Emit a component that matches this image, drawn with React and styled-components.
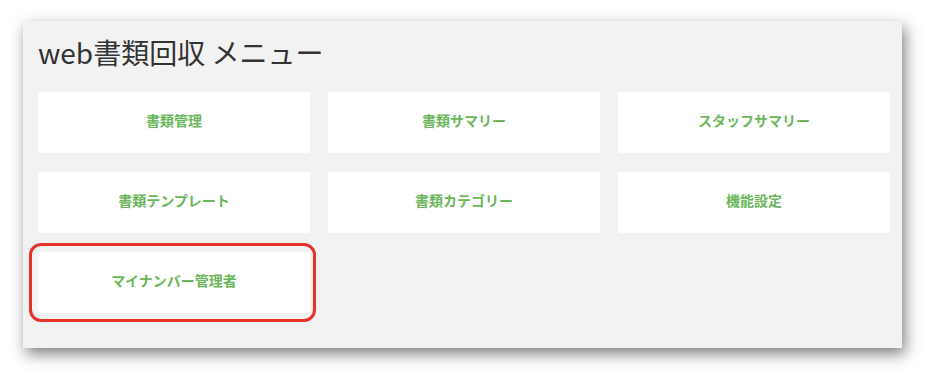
import React from "react"
import styled, { createGlobalStyle } from "styled-components"

const GlobalStyle = createGlobalStyle`
  body {
    margin: 0;
    background: #fff;
    font-family: "Noto Sans CJK JP", "Noto Sans", sans-serif;
  }
`

const Page = styled.div`
  padding: 21px 0 30px 23px;
`

const Panel = styled.div`
  width: 879px;
  box-sizing: border-box;
  padding: 11px 12px 35px 15px;
  background: #f2f2f2;
  box-shadow: 3px 6px 14px rgba(0, 0, 0, 0.5);
`

const Title = styled.h1`
  margin: 0 0 20px;
  font-size: 28px;
  line-height: 40px;
  font-weight: 400;
  color: #333;
`

const Grid = styled.div`
  display: grid;
  grid-template-columns: repeat(3, 272px);
  grid-auto-rows: 61px;
  column-gap: 18px;
  row-gap: 19px;
`

const Item = styled.a`
  position: relative;
  display: flex;
  align-items: center;
  justify-content: center;
  padding-bottom: 5px;
  box-sizing: border-box;
  background: #fff;
  border-radius: 2px;
  color: #6bb65a;
  font-size: 14px;
  font-weight: 700;
  text-decoration: none;
  cursor: pointer;
  ${({ highlight }) => highlight && `
    &::after {
      content: '';
      position: absolute;
      top: -9px;
      left: -9px;
      right: -6px;
      bottom: -9px;
      border: 3px solid #e63329;
      border-radius: 12px;
      pointer-events: none;
    }
  `}
`

const items = [
  "書類管理",
  "書類サマリー",
  "スタッフサマリー",
  "書類テンプレート",
  "書類カテゴリー",
  "機能設定",
  "マイナンバー管理者",
]

export default function App() {
  return (
    <>
      <GlobalStyle />
      <Page>
        <Panel>
          <Title>web書類回収 メニュー</Title>
          <Grid>
            {items.map((label, i) => (
              <Item key={label} highlight={i === items.length - 1}>{label}</Item>
            ))}
          </Grid>
        </Panel>
      </Page>
    </>
  )
}
